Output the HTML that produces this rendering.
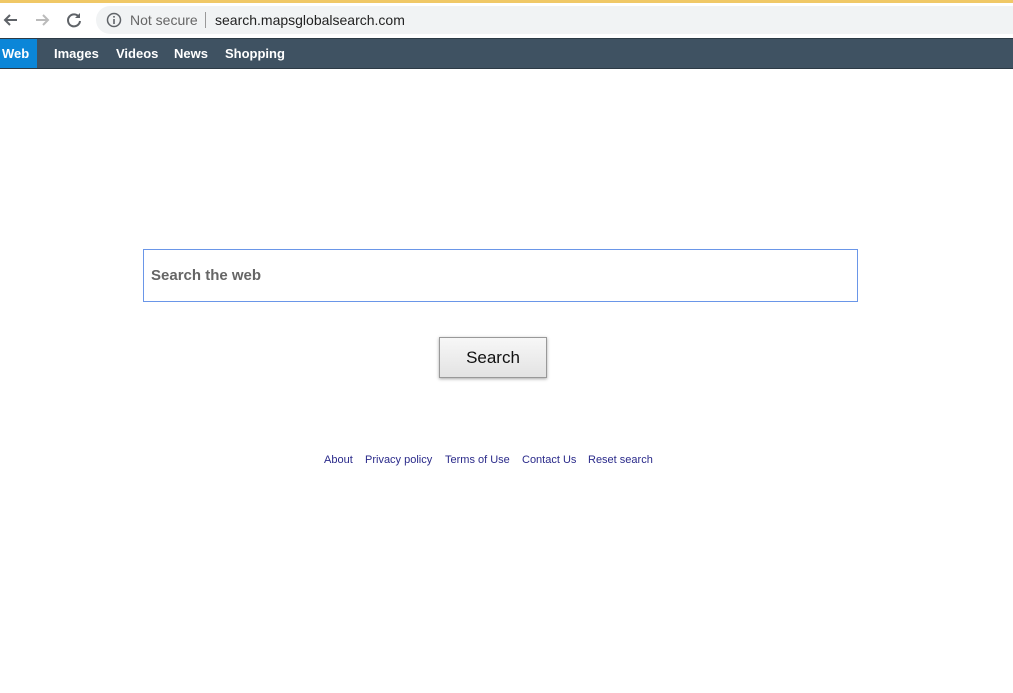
<!DOCTYPE html>
<html><head><meta charset="utf-8"><style>
*{margin:0;padding:0;box-sizing:border-box}
body{width:1013px;height:693px;background:#fff;font-family:"Liberation Sans",Arial,sans-serif;position:relative;overflow:hidden}
.topline{position:absolute;left:0;top:0;width:1013px;height:3px;background:#f0c866}
.chrome{position:absolute;left:0;top:3px;width:1013px;height:35px;background:#fff}
.url{position:absolute;left:96px;top:3px;width:930px;height:28px;border-radius:14px;background:#f1f3f4;font-size:14px;line-height:28px}
.nav{position:absolute;left:0;top:38px;width:1013px;height:31px;background:#3f5262;border-top:1px solid #2c3a45;border-bottom:1px solid #2c3a45}
.nav span{position:absolute;top:0;line-height:29px;color:#fff;font-weight:bold;font-size:13px}
.web{background:#0b86d8;left:0;width:37px;padding-left:2px}
.box{position:absolute;left:143px;top:249px;width:715px;height:53px;border:1px solid #6a96e8;font-size:15px;font-weight:bold;color:#666;padding-left:7px;line-height:51px}
.btn{position:absolute;left:439px;top:337px;width:108px;height:41px;border:1px solid #999;background:linear-gradient(#f7f7f7,#e3e3e3);box-shadow:0 1px 3px rgba(0,0,0,.35);font-size:17px;text-align:center;line-height:39px;color:#111}
.foot{position:absolute;top:454px;font-size:11px;color:#2a2a8a}
</style></head><body>
<div class="topline"></div>
<div class="chrome">
<svg style="position:absolute;left:2px;top:8px" width="18" height="18" viewBox="0 0 18 18"><path d="M15 9H3M8 4L3 9l5 5" stroke="#5f6368" stroke-width="2" fill="none"/></svg>
<svg style="position:absolute;left:33px;top:8px" width="18" height="18" viewBox="0 0 18 18"><path d="M3 9h12M10 4l5 5-5 5" stroke="#bbb" stroke-width="2" fill="none"/></svg>
<svg style="position:absolute;left:65px;top:8px" width="18" height="18" viewBox="0 0 18 18"><path d="M14 6A6 6 0 1 0 15 10" stroke="#5f6368" stroke-width="2" fill="none"/><path d="M15 2v5h-5z" fill="#5f6368"/></svg>
<div class="url">
<svg style="position:absolute;left:10px;top:6px" width="16" height="16" viewBox="0 0 16 16"><circle cx="8" cy="8" r="6.5" stroke="#5f6368" stroke-width="1.5" fill="none"/><rect x="7.2" y="7" width="1.6" height="5" fill="#5f6368"/><rect x="7.2" y="4" width="1.6" height="1.6" fill="#5f6368"/></svg>
<span style="position:absolute;left:34px;color:#666">Not secure</span>
<span style="position:absolute;left:109px;top:6px;width:1px;height:16px;background:#999"></span>
<span style="position:absolute;left:119px;color:#222">search.mapsglobalsearch.com</span>
</div>
</div>
<div class="nav">
<span class="web">Web</span>
<span style="left:54px">Images</span>
<span style="left:116px">Videos</span>
<span style="left:174px">News</span>
<span style="left:225px">Shopping</span>
</div>
<div class="box">Search the web</div>
<div class="btn">Search</div>
<span class="foot" style="left:324px">About</span>
<span class="foot" style="left:365px">Privacy policy</span>
<span class="foot" style="left:445px">Terms of Use</span>
<span class="foot" style="left:522px">Contact Us</span>
<span class="foot" style="left:588px">Reset search</span>
</body></html>
